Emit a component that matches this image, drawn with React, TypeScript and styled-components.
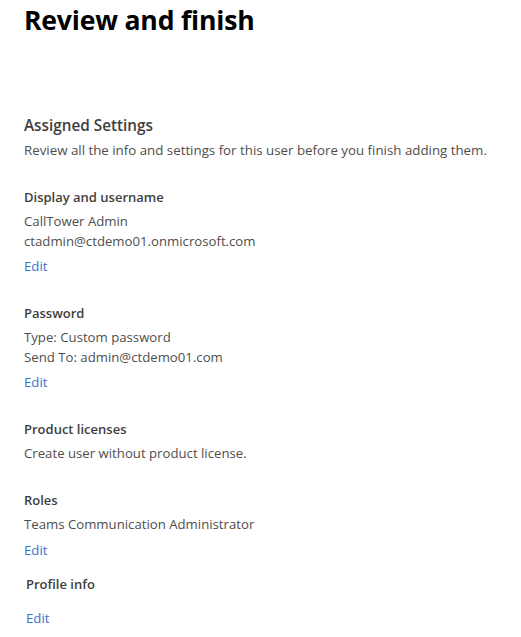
import styled, { createGlobalStyle } from 'styled-components'

const GlobalStyle = createGlobalStyle`
    html, body {
        margin: 0;
        padding: 0;
        background: #fff;
    }
    body {
        font-family: 'Open Sans', 'Noto Sans', sans-serif;
        color: #504e4c;
    }
`

const Page = styled.main`
    width: 521px;
    height: 637px;
    overflow: hidden;
    padding: 2px 0 0 24px;
    box-sizing: border-box;
`

const Title = styled.h1`
    margin: 0 0 75px;
    font-size: 26.6px;
    line-height: 36px;
    font-weight: 700;
    letter-spacing: -0.2px;
    color: #000;
`

const Heading = styled.h2`
    margin: 0 0 3px;
    font-size: 15.3px;
    line-height: 24px;
    font-weight: 600;
    color: #403e3d;
`

const Intro = styled.p`
    margin: 0 0 27px;
    font-size: 13.3px;
    line-height: 20px;
`

const Section = styled.section<{ $gap: number; $indent?: number }>`
    margin: 0 0 ${({ $gap }) => $gap}px ${({ $indent }) => $indent ?? 0}px;
`

const Label = styled.h3`
    margin: 0 0 4px;
    font-size: 13px;
    line-height: 20px;
    font-weight: 600;
    color: #403e3d;
`

const Line = styled.div`
    font-size: 13.2px;
    line-height: 20px;
`

const EditLink = styled.a<{ $top?: number }>`
    display: block;
    margin-top: ${({ $top }) => $top ?? 5}px;
    font-size: 13.2px;
    line-height: 20px;
    color: #3a72c8;
    text-decoration: none;
`

const App = () => (
    <Page>
        <GlobalStyle />
        <Title>Review and finish</Title>
        <Heading>Assigned Settings</Heading>
        <Intro>Review all the info and settings for this user before you finish adding them.</Intro>
        <Section $gap={27}>
            <Label>Display and username</Label>
            <Line>CallTower Admin</Line>
            <Line>ctadmin@ctdemo01.onmicrosoft.com</Line>
            <EditLink href="#">Edit</EditLink>
        </Section>
        <Section $gap={27}>
            <Label>Password</Label>
            <Line>Type: Custom password</Line>
            <Line>Send To: admin@ctdemo01.com</Line>
            <EditLink href="#">Edit</EditLink>
        </Section>
        <Section $gap={27}>
            <Label>Product licenses</Label>
            <Line>Create user without product license.</Line>
        </Section>
        <Section $gap={14}>
            <Label>Roles</Label>
            <Line>Teams Communication Administrator</Line>
            <EditLink href="#" $top={6}>Edit</EditLink>
        </Section>
        <Section $gap={0} $indent={2}>
            <Label>Profile info</Label>
            <EditLink href="#" $top={14}>Edit</EditLink>
        </Section>
    </Page>
)

export default App
